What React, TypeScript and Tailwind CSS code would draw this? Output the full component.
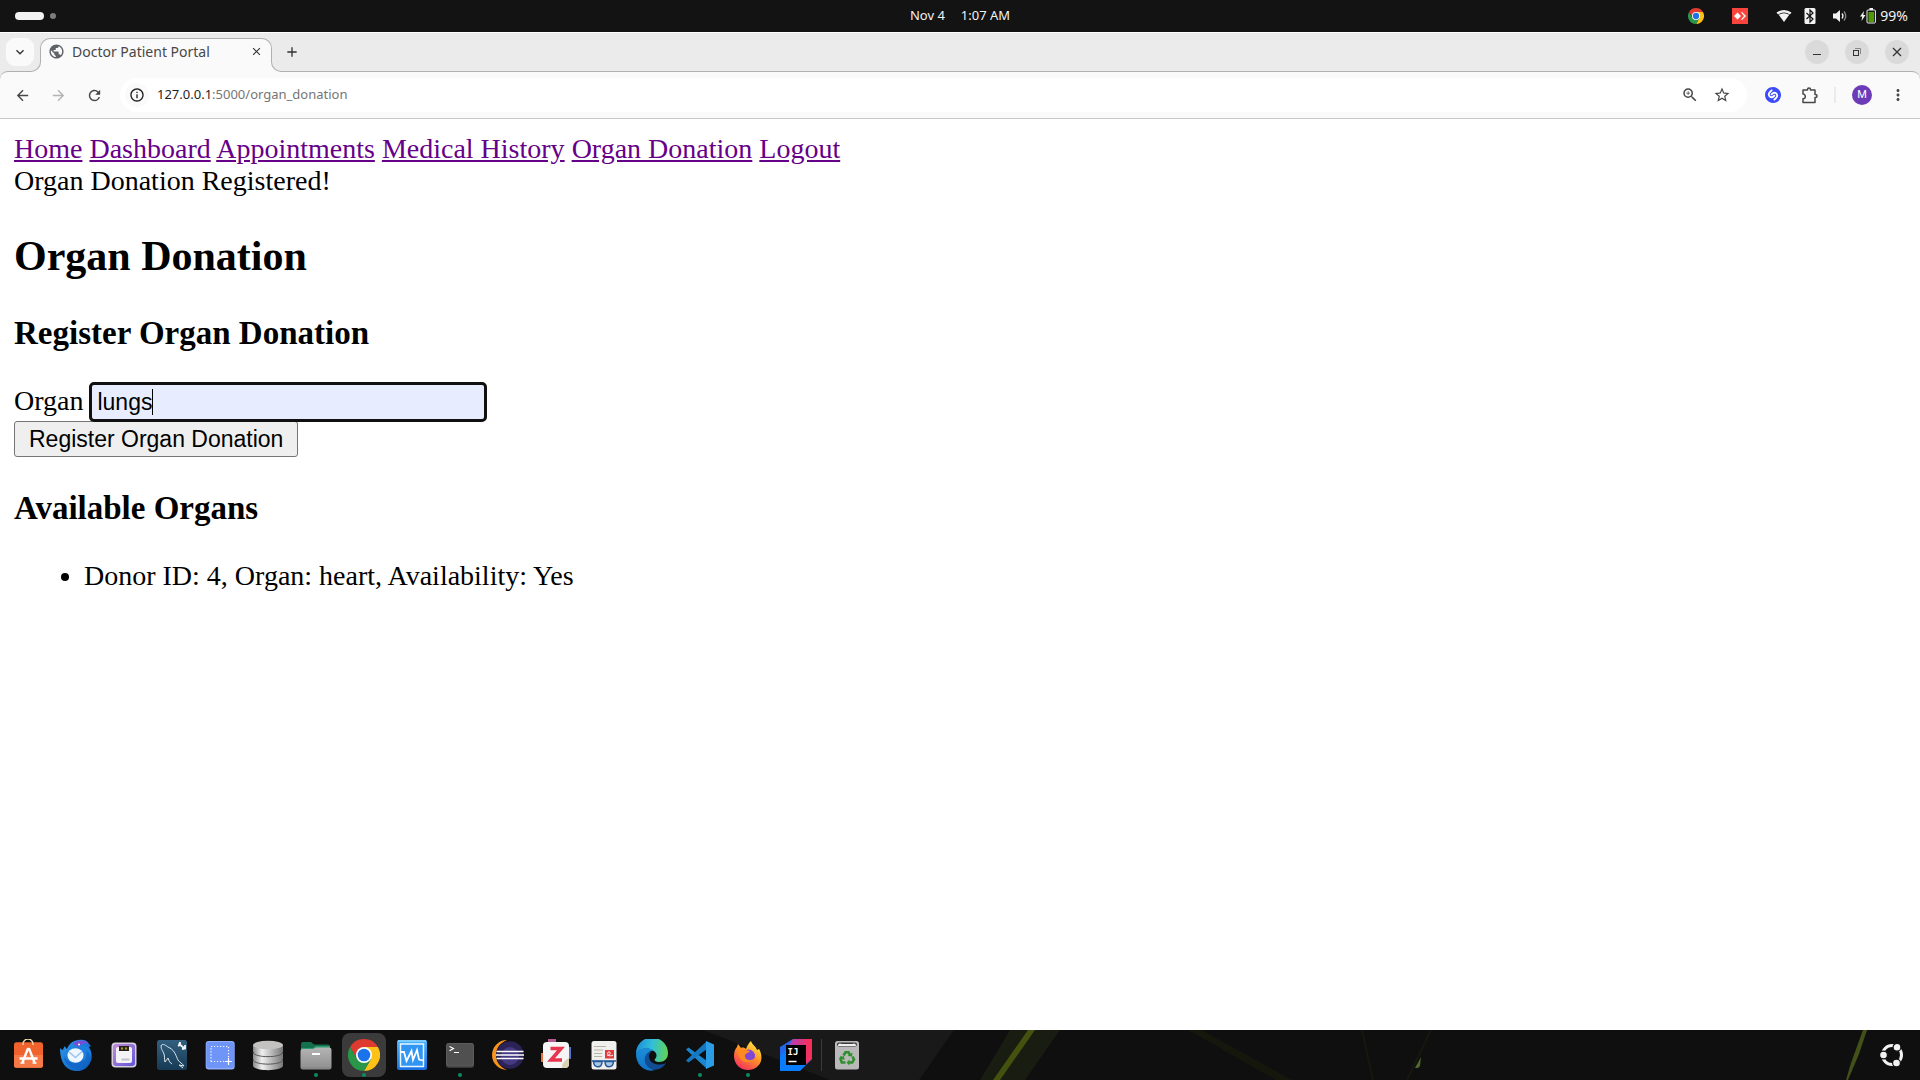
import React from "react";
import {
  MdAdd,
  MdArrowBack,
  MdArrowForward,
  MdClose,
  MdMoreVert,
  MdOutlineInfo,
  MdPublic,
  MdRefresh,
  MdStarBorder,
  MdZoomIn,
  MdKeyboardArrowDown,
} from "react-icons/md";
import { SiShazam } from "react-icons/si";

function Svg({ children }: { children: React.ReactNode }) {
  return (
    <svg viewBox="0 0 32 32" className="size-8" aria-hidden="true">
      {children}
    </svg>
  );
}

function ChromeLogo({ className }: { className: string }) {
  return (
    <svg viewBox="0 0 32 32" className={className} aria-hidden="true">
      <path d="M2.14 8A16 16 0 0 1 29.86 8H16L9.07 20Z" fill="#df3a2f" />
      <path d="M29.86 8A16 16 0 0 1 16 32L22.93 20 16 8Z" fill="#fdc117" />
      <path d="M16 32A16 16 0 0 1 2.14 8L9.07 20H22.93Z" fill="#2a9648" />
      <circle cx="16" cy="16" r="8" fill="#fff" />
      <circle cx="16" cy="16" r="6.3" fill="#1a73e8" />
    </svg>
  );
}

const AppCenter = () => (
  <Svg>
    <rect x="2" y="3.3" width="29" height="25.4" rx="2.5" fill="#f0632c" />
    <path d="M2 16h29v10.2a2.5 2.5 0 0 1-2.5 2.5h-24A2.5 2.5 0 0 1 2 26.2z" fill="#f57a45" />
    <path d="M11 6V5a5 5 0 0 1 10 0v1" fill="none" stroke="#f2dcae" strokeWidth="1.3" />
    <path d="M10.5 23.500 15.800 10h1.400l5.300 13.500M7.500 19.500h18" fill="none" stroke="#fff" strokeWidth="2.4" strokeLinejoin="round" />
    <path d="M8.500 24h4M20.500 24h4" stroke="#fff" strokeWidth="1.5" />
  </Svg>
);

const Thunderbird = () => (
  <Svg>
    <defs>
      <linearGradient id="tb" x1="0" y1="0" x2="1" y2="1">
        <stop offset="0" stopColor="#2b9bf0" />
        <stop offset="1" stopColor="#0b57b8" />
      </linearGradient>
    </defs>
    <path d="M0 9c1 1 2 2 3 2 0-1 1-3 2-4 0 1 1 2 2 3 2-6 8-10 16-9 3 0 5 2 6 4l2 2-2 1c3 5 4 11 1 16-3 6-9 9-15 8C6 31 0 24 0 9z" fill="url(#tb)" />
    <path d="M13 5c3-4 12-5 16 0-5-2-8 0-10 3-3-2-5-2-6-3z" fill="#7b4bd8" />
    <path d="M19 8c7-4 13 2 12 10-1-4-3-6-5-6 1 6-1 9-3 11z" fill="#1d7fe2" />
    <ellipse cx="15.5" cy="16.5" rx="8" ry="7.3" fill="#eef6ff" />
    <path d="m9 13 6.500 5.500L22 12.500" fill="none" stroke="#9bc4ee" strokeWidth="1.5" />
    <path d="M4 17c0 7 5 11 11 12 6 0 9-4 9-9-2 4-6 5-9 4-6 0-9-3-11-7z" fill="#1268ca" />
    <circle cx="19" cy="5.5" r="1" fill="#fff" />
  </Svg>
);

const StartupDisk = () => (
  <Svg>
    <defs>
      <linearGradient id="sd" x1="0" y1="0" x2="1" y2="1">
        <stop offset="0" stopColor="#c78bd8" />
        <stop offset="1" stopColor="#5d55d8" />
      </linearGradient>
    </defs>
    <rect x="3.5" y="3.5" width="25" height="25" rx="4" fill="#d5d2de" />
    <rect x="5" y="5" width="22" height="22" rx="3" fill="url(#sd)" />
    <rect x="8" y="8" width="16" height="16" rx="2" fill="#f4f4f6" />
    <rect x="11" y="7" width="10" height="5" fill="#26231b" />
    <path d="M13 9.500h2M17 9.500h2" stroke="#b39b20" strokeWidth="2" />
    <path d="M13.500 20.500h8" stroke="#c2c2c8" strokeWidth="2" />
  </Svg>
);

const MysqlWorkbench = () => (
  <Svg>
    <defs>
      <linearGradient id="mw" x1="0" y1="0" x2="0" y2="1">
        <stop offset="0" stopColor="#33607f" />
        <stop offset="1" stopColor="#163a55" />
      </linearGradient>
    </defs>
    <rect x="1" y="1" width="30" height="30" rx="2.5" fill="url(#mw)" />
    <path
      d="M9 23c-1-4 0-5-1-8-1-3-4-6-2.500-9C8 4 11 8 14 9c5 3 6 8 8 12 2 3 4 3 6 6l-5-1 4 3M9 23l3-4c1 3 2 5 4 6"
      fill="none"
      stroke="#dbe7ef"
      strokeWidth="1"
    />
    <path d="m22.500 4.500 5.500 4.500M24 3v3l-2 1M29 6v3.500l-3 .5" fill="none" stroke="#f2f6f9" strokeWidth="1.8" />
  </Svg>
);

const Screenshot = () => (
  <Svg>
    <rect x="1.7" y="2" width="29" height="28.5" rx="3" fill="#8faefb" />
    <rect x="2.5" y="3" width="27.5" height="26" rx="2.5" fill="#6f95f8" />
    <path d="M7 22.500V7.500h17.500V19M7 22.500h14" fill="none" stroke="#fff" strokeWidth="1.2" strokeDasharray="1.200 1.800" />
    <path d="M24.500 19v7M21 22.500h7" stroke="#fff" strokeWidth="1.2" />
  </Svg>
);

const Database = () => (
  <Svg>
    <defs>
      <linearGradient id="db" x1="0" y1="0" x2="1" y2="0">
        <stop offset="0" stopColor="#8b8b8b" />
        <stop offset=".3" stopColor="#f0f0f0" />
        <stop offset="1" stopColor="#777" />
      </linearGradient>
    </defs>
    <path d="M1 24v3c2 5.500 28 5.500 30 0v-6H1z" fill="url(#db)" />
    <path d="M1 21c2 5.500 28 5.500 30 0" fill="none" stroke="#555" strokeWidth="1" />
    <path d="M1 14v6c2 5.500 28 5.500 30 0v-6z" fill="url(#db)" />
    <path d="M1 13.500c2 5.500 28 5.500 30 0" fill="none" stroke="#555" strokeWidth="1" />
    <path d="M1 6v6.500c2 5.500 28 5.500 30 0V6z" fill="url(#db)" />
    <ellipse cx="16" cy="6" rx="15" ry="4.3" fill="#c4c2c1" />
  </Svg>
);

const Files = () => (
  <Svg>
    <defs>
      <linearGradient id="fl" x1="0" y1="0" x2="0" y2="1">
        <stop offset="0" stopColor="#b4b4b4" />
        <stop offset="1" stopColor="#8e8e8e" />
      </linearGradient>
    </defs>
    <path d="M1 5a2 2 0 0 1 2-2h8l3 2.500h14a2 2 0 0 1 2 2V14H1z" fill="#12704d" />
    <path d="M1 11V9h12l3-2h14v4z" fill="#2c9a70" />
    <path d="M.5 12a2 2 0 0 1 2-2h10.500l3-1.500h13a2.500 2.500 0 0 1 2.500 2.500v17a2.500 2.500 0 0 1-2.500 2.500H3a2.500 2.500 0 0 1-2.500-2.500z" fill="url(#fl)" />
    <path d="M12 15h8" stroke="#fff" strokeWidth="2" />
    <path d="M1 29h30" stroke="#808080" strokeWidth="1" />
  </Svg>
);

const SystemMonitor = () => (
  <Svg>
    <defs>
      <linearGradient id="sm" x1="0" y1="0" x2="0" y2="1">
        <stop offset="0" stopColor="#49b4fb" />
        <stop offset="1" stopColor="#1b6fe0" />
      </linearGradient>
    </defs>
    <rect x="1" y="1" width="30" height="30" rx="2" fill="url(#sm)" />
    <path d="M2 2h28" stroke="#8fd4ff" strokeWidth="1.5" />
    <rect x="4.5" y="5" width="23" height="22.5" fill="#3195f3" stroke="#e8f6ff" strokeWidth="1.5" />
    <path d="M5 13h3l2.500 9L14 15l1.500-3 1.500 9 4-10 2 9.500 4 1" fill="none" stroke="#fff" strokeWidth="1.8" />
  </Svg>
);

const Terminal = () => (
  <Svg>
    <rect x="2" y="4" width="28" height="25" rx="2.5" fill="#383838" />
    <rect x="2.5" y="4.5" width="27" height="22.5" rx="2" fill="#505050" stroke="#626262" strokeWidth=".8" />
    <path d="m5.500 7.500 4 2-4 2.200M10 13.500h5" fill="none" stroke="#fff" strokeWidth="1.2" />
  </Svg>
);

const Eclipse = () => (
  <Svg>
    <path d="M15 1A15 15 0 0 0 15 31C8 28 4 23 4 16S8 4 15 1z" fill="#f7941e" />
    <circle cx="18" cy="16" r="13.8" fill="#2c2255" />
    <circle cx="18" cy="17" r="9" fill="#443a82" />
    <path d="M4.500 12.500h27M4 16h28M4.500 19.500h27" stroke="#fff" strokeWidth="1.5" />
  </Svg>
);

const Zotero = () => (
  <Svg>
    <rect x="8" y="0" width="8" height="6" fill="#b5588d" />
    <rect x="25" y="8" width="6" height="12" fill="#5a70c9" />
    <rect x="1" y="14" width="6" height="9" fill="#e8703c" />
    <rect x="3" y="3" width="26" height="26" rx="4" fill="#f5f5f5" />
    <path d="M29 19v6a4 4 0 0 1-4 4h-3c0-5 3-8 7-10z" fill="#d9d2b4" />
    <path d="M10.500 9.500h10.500L11 21h11" fill="none" stroke="#e9344f" strokeWidth="3.6" />
  </Svg>
);

const DocumentViewer = () => (
  <Svg>
    <rect x="3.5" y="2" width="25" height="28.5" rx="2.5" fill="#f1f0ee" />
    <path d="M6 7.500h12M6 11h9M6 14.500h8M6 17.500h8" stroke="#b7b4a6" strokeWidth="1" />
    <rect x="17" y="11" width="9" height="8.5" fill="#e23b3b" />
    <path d="M19 16c2 2 5-3 2-3s-1 6 4 3" fill="none" stroke="#fff" strokeWidth="1" />
    <g fill="#a9c8e0" stroke="#25589b" strokeWidth="1.5">
      <path d="M5.500 22.500h8.500c0 7-8 7-8.500 0zM17 22.500h8.500c-.5 7-8.500 7-8.500 0z" />
      <path d="M4 22h24" />
    </g>
  </Svg>
);

const Edge = () => (
  <Svg>
    <defs>
      <linearGradient id="e1" x1="0" y1=".4" x2="1" y2=".5">
        <stop offset="0" stopColor="#1e8ddb" />
        <stop offset=".5" stopColor="#32c0d6" />
        <stop offset="1" stopColor="#62d455" />
      </linearGradient>
      <linearGradient id="e2" x1="0" y1="0" x2="0" y2="1">
        <stop offset="0" stopColor="#1b8fdc" />
        <stop offset="1" stopColor="#1270c4" />
      </linearGradient>
    </defs>
    <path d="M0 15A16 16 0 0 1 32 14c0 6-4 9-9 9-4 0-5-2-4-3 2-2 2-5 0-7-5-5-14-5-19 2z" fill="url(#e1)" />
    <path d="M0 15c4-7 13-8 18-3-3-1-8 2-8 8 0 5 4 10 9 11C9 34 0 26 0 15z" fill="url(#e2)" />
    <path d="M13 13c-5 3-6 10-1 15 5 4 13 4 18-4-6 3-16 2-17-6-.3-2 .5-4 2-5z" fill="#124c93" />
  </Svg>
);

const VsCode = () => (
  <Svg>
    <path d="M2 10.500 4.500 8.500 23 22v8z" fill="#1a86d0" />
    <path d="M2 21.500 4.500 23.500 23 10V2z" fill="#1577bf" />
    <path d="M22 2 30 5.500v21L22 30z" fill="#2b9de6" />
  </Svg>
);

const Firefox = () => (
  <Svg>
    <defs>
      <linearGradient id="ff" x1=".8" y1="0" x2=".2" y2="1">
        <stop offset="0" stopColor="#fff04a" />
        <stop offset=".45" stopColor="#ff9426" />
        <stop offset="1" stopColor="#f52862" />
      </linearGradient>
    </defs>
    <path d="M2 17c0-4 1-7 3-9l1-3 3 4c2-1 4 0 5 1 1-4 4-7 5-8 1 4 5 5 6 9l2-1c5 8 3 20-11 21C8 31 2 25 2 17z" fill="url(#ff)" />
    <circle cx="16.5" cy="17" r="6.5" fill="#8146d6" />
    <path d="M6 11c3-3 6-2 8 0l4 1c-1 2-4 2-5 4-1 5 6 7 10 3-2 7-17 7-17-8z" fill="#ff8a1f" />
  </Svg>
);

const IntelliJ = () => (
  <Svg>
    <defs>
      <linearGradient id="ij" x1="0" y1="0" x2="1" y2="0">
        <stop offset="0" stopColor="#9a45cf" />
        <stop offset="1" stopColor="#ff2d50" />
      </linearGradient>
    </defs>
    <path d="M14 0h18v20L20 32H0V13z" fill="#087cfa" />
    <path d="M13 0h19v20l-7 6V6H5z" fill="url(#ij)" />
    <path d="M0 8 13 0 6 10 0 18z" fill="#2466e8" />
    <rect x="6" y="6" width="20" height="20" fill="#000" />
    <text x="7.5" y="16" fontFamily="DejaVu Sans Mono, monospace" fontWeight="700" fontSize="9" fill="#fff">
      IJ
    </text>
    <path d="M8.500 22.500h8" stroke="#fff" strokeWidth="1.5" />
  </Svg>
);

const Trash = () => (
  <Svg>
    <rect x="4" y="2" width="24" height="28.5" rx="2.5" fill="#b9b9b9" />
    <rect x="6" y="3.5" width="20" height="4" rx="2" fill="#3a3a3a" />
    <path d="M7 7c0-3 2-3 4-2h10c2-1 4-1 4 2" fill="#eee" />
    <g fill="none" stroke="#2f8f2b" strokeWidth="2.6">
      <path d="m12.500 16.500 2-3.200h3l1.800 3M21.500 17.500l1.500 3-1.800 3H18M14.500 23.500h-3.700L9.500 20l1.500-2.500" />
    </g>
    <path d="m16.500 17 4.500.5.500-4zM18.500 20.500v6L15.500 23.500zM8 19l5-2 .5 4z" fill="#2f8f2b" />
  </Svg>
);

const dock = [
  { name: "App Center", Icon: AppCenter },
  { name: "Thunderbird", Icon: Thunderbird },
  { name: "Startup Disk Creator", Icon: StartupDisk },
  { name: "MySQL Workbench", Icon: MysqlWorkbench },
  { name: "Screenshot", Icon: Screenshot },
  { name: "Database", Icon: Database },
  { name: "Files", Icon: Files, running: true },
  { name: "Google Chrome", Icon: () => <ChromeLogo className="size-8" />, running: true, active: true },
  { name: "System Monitor", Icon: SystemMonitor },
  { name: "Terminal", Icon: Terminal, running: true },
  { name: "Eclipse", Icon: Eclipse },
  { name: "Zotero", Icon: Zotero },
  { name: "Document Viewer", Icon: DocumentViewer },
  { name: "Microsoft Edge", Icon: Edge },
  { name: "Visual Studio Code", Icon: VsCode, running: true },
  { name: "Firefox", Icon: Firefox, running: true },
  { name: "IntelliJ IDEA", Icon: IntelliJ },
];

function TopBar() {
  return (
    <header className="grid h-8 shrink-0 grid-cols-3 items-center bg-[#131313] text-[13px] text-[#f2f2f2]">
      <button aria-label="Activities" className="flex items-center gap-1.5 pl-[15px]">
        <span className="h-2 w-[29px] rounded-full bg-[#f2f2f2]" />
        <span className="size-1.5 rounded-full bg-[#7d7d7d]" />
      </button>
      <button className="flex justify-center gap-4">
        <span>Nov 4</span>
        <span>1:07 AM</span>
      </button>
      <div className="flex items-center justify-end pr-3">
        <ChromeLogo className="mr-7 size-4" />
        <svg viewBox="0 0 16 16" className="mr-7 size-4" aria-hidden="true">
          <rect width="16" height="16" fill="#fa443e" />
          <path d="M5.500 4.500 9 8l-3.500 3.500L2 8zM9 4.500l1-.5 4 4-4 4-1-.5L12 8z" fill="#fff" />
        </svg>
        <svg viewBox="0 0 16 16" className="mr-3 size-4" aria-hidden="true">
          <path d="M.5 4.500Q8-.5 15.500 4.500l-1.500 2Q8 2.500 2 6.500z" fill="#f2f2f2" />
          <path d="M2.700 6.800Q8 3.500 13.300 6.800L8 14z" fill="#f2f2f2" />
        </svg>
        <svg viewBox="0 0 12 16" className="mr-4 h-4 w-3" aria-hidden="true">
          <rect x=".5" width="11" height="16" rx="1.5" fill="#f2f2f2" />
          <path d="m2.500 5 6.500 6-3 3V2l3 3-6.500 6" fill="none" stroke="#131313" strokeWidth="1.2" />
        </svg>
        <svg viewBox="0 0 16 16" className="mr-3 size-4" aria-hidden="true">
          <path d="M1 5.500h3L8 2v12l-4-3.500H1z" fill="#f2f2f2" />
          <path d="M10 5.500q2 2.500 0 5" fill="none" stroke="#f2f2f2" strokeWidth="1.3" />
          <path d="M12 3.500q3.500 4.500 0 9" fill="none" stroke="#8a8a8a" strokeWidth="1.3" />
        </svg>
        <svg viewBox="0 0 16 16" className="mr-1 size-4" aria-hidden="true">
          <path d="M4 3 0 8.500h2.200L1.500 13l4-6H3.300z" fill="#f2f2f2" />
          <rect x="7" y="2" width="8.4" height="13" rx="1" fill="none" stroke="#f2f2f2" />
          <rect x="9.5" y="0" width="3.5" height="2" fill="#f2f2f2" />
          <rect x="8.5" y="4" width="5.5" height="10" fill="#4e9a06" />
        </svg>
        <span className="text-sm">99%</span>
      </div>
    </header>
  );
}

function TabStrip() {
  return (
    <div className="flex h-10 shrink-0 items-end border-t border-white bg-[#ebebeb]">
      <button
        aria-label="Search tabs"
        className="mb-1.5 ml-1.5 flex size-7 items-center justify-center rounded-[9px] bg-[#fafafa] text-[#333]"
      >
        <MdKeyboardArrowDown size={16} />
      </button>
      <div className="relative z-10 ml-1.5 flex h-[34px] w-[232px] items-center rounded-t-[10px] border border-b-0 border-[#b0b0b0] bg-[#fafafa] pr-2 pb-2 pl-[7px]">
        <span className="absolute bottom-0 -left-2.5 size-2.5 bg-[#fafafa]">
          <span className="block size-full rounded-br-[10px] border-r border-b border-[#b0b0b0] bg-[#ebebeb]" />
        </span>
        <span className="absolute -right-2.5 bottom-0 size-2.5 bg-[#fafafa]">
          <span className="block size-full rounded-bl-[10px] border-b border-l border-[#b0b0b0] bg-[#ebebeb]" />
        </span>
        <MdPublic size={17} className="text-[#5f6368]" />
        <span className="ml-[7px] flex-1 text-sm text-[#474747]">Doctor Patient Portal</span>
        <button aria-label="Close tab" className="text-[#333]">
          <MdClose size={13} />
        </button>
      </div>
      <button aria-label="New tab" className="mb-3 ml-3 text-[#333]">
        <MdAdd size={16} />
      </button>
      <div className="ml-auto flex gap-4 pr-[11px] pb-2">
        <button aria-label="Minimize" className="flex size-6 items-center justify-center rounded-full bg-[#dadada]">
          <svg viewBox="0 0 12 12" className="size-3">
            <path d="M2 8.500h8" stroke="#333" />
          </svg>
        </button>
        <button aria-label="Restore" className="flex size-6 items-center justify-center rounded-full bg-[#dadada]">
          <svg viewBox="0 0 12 12" className="size-3">
            <path d="M4 2.500h5.500V8" fill="none" stroke="#888" />
            <rect x="2.5" y="4.5" width="5" height="5" fill="none" stroke="#333" />
          </svg>
        </button>
        <button aria-label="Close" className="flex size-6 items-center justify-center rounded-full bg-[#dadada]">
          <svg viewBox="0 0 12 12" className="size-3">
            <path d="m2 2 8 8M10 2l-8 8" stroke="#333" strokeWidth="1.3" />
          </svg>
        </button>
      </div>
    </div>
  );
}

function Toolbar() {
  return (
    <div className="-mt-px shrink-0 bg-[#ebebeb]">
      <div className="flex h-12 items-center rounded-t-lg border-t border-b border-t-[#b0b0b0] border-b-[#c8c8c8] bg-[#fafafa] pr-[13px] pl-3.5 text-[#474747]">
        <button aria-label="Back">
          <MdArrowBack size={17} />
        </button>
        <button aria-label="Forward" className="ml-[19px] text-[#b4b4b4]">
          <MdArrowForward size={17} />
        </button>
        <button aria-label="Reload" className="ml-[19px]">
          <MdRefresh size={17} />
        </button>
        <div className="ml-[17px] flex h-[34px] flex-1 items-center rounded-full bg-white pr-4 pl-[5px]">
          <button
            aria-label="Site information"
            className="flex size-6 items-center justify-center rounded-full bg-[#fafafa] text-[#1f1f1f]"
          >
            <MdOutlineInfo size={16} />
          </button>
          <span className="ml-2 flex-1 text-[13px] text-[#757575]">
            <span className="text-[#1f1f1f]">127.0.0.1</span>:5000/organ_donation
          </span>
          <button aria-label="Zoom">
            <MdZoomIn size={18} />
          </button>
          <button aria-label="Bookmark this page" className="ml-3.5">
            <MdStarBorder size={18} />
          </button>
        </div>
        <button aria-label="Shazam" className="ml-[18px] rounded-full bg-white text-[#3c4bfa]">
          <SiShazam size={16} />
        </button>
        <button aria-label="Extensions" className="ml-5">
          <svg viewBox="0 0 17 17" className="size-[17px]">
            <path
              d="M2 3h4.500V2.500a1.500 1.500 0 0 1 3 0V3H14v4.500h.5a1.500 1.500 0 0 1 0 3H14V15.500H2v-3.800a2.300 2.300 0 0 0 0-4.600z"
              fill="none"
              stroke="#474747"
              strokeWidth="1.5"
              strokeLinejoin="round"
            />
          </svg>
        </button>
        <span className="mx-4 h-4 w-0.5 bg-[#ebebeb]" />
        <button
          aria-label="Profile"
          className="flex size-5 items-center justify-center rounded-full bg-[#6b3bb8] font-[Roboto,sans-serif] text-[11px] text-white"
        >
          M
        </button>
        <button aria-label="Menu" className="ml-[17px]">
          <MdMoreVert size={18} />
        </button>
      </div>
    </div>
  );
}

const links = ["Home", "Dashboard", "Appointments", "Medical History", "Organ Donation", "Logout"];

function Page() {
  return (
    <main className="flex-1 bg-white p-3.5 font-['Liberation_Serif','Times_New_Roman',serif] text-[28px] leading-8 text-black">
      <nav>
        {links.map((label) => (
          <React.Fragment key={label}>
            <a href="#" className="text-[#660088] underline">
              {label}
            </a>{" "}
          </React.Fragment>
        ))}
      </nav>
      <p>Organ Donation Registered!</p>
      <h2 className="mt-[35px] text-[42px] leading-[48px] font-bold">Organ Donation</h2>
      <h3 className="mt-[35px] text-[33px] leading-[37px] font-bold">Register Organ Donation</h3>
      <form className="mt-[33px]" onSubmit={(e) => e.preventDefault()}>
        <div className="flex h-9 items-start gap-[9px]">
          <label htmlFor="organ">Organ</label>
          <span className="relative flex">
            <input
              id="organ"
              type="text"
              defaultValue="lungs"
              className="h-[34px] w-[392px] rounded-[2px] bg-[#e7edfe] px-[5px] font-['Liberation_Sans',Arial,sans-serif] text-[23px] text-black outline-3 outline-[#101010]"
            />
            <span className="absolute top-1 left-[60px] h-[26px] w-px bg-black" />
          </span>
        </div>
        <button
          type="submit"
          className="flex h-9 items-center rounded-[3px] border border-[#767676] bg-[#efefef] px-3.5 font-['Liberation_Sans',Arial,sans-serif] text-[23px]"
        >
          Register Organ Donation
        </button>
      </form>
      <h3 className="mt-[33px] text-[33px] leading-[37px] font-bold">Available Organs</h3>
      <ul className="mt-[33px] list-disc pl-[70px]">
        <li>Donor ID: 4, Organ: heart, Availability: Yes</li>
      </ul>
    </main>
  );
}

function Dock() {
  return (
    <footer className="relative flex h-[50px] shrink-0 items-center bg-[#0f0f0f] pr-4 pl-3">
      <svg
        viewBox="0 0 1920 50"
        preserveAspectRatio="none"
        className="absolute inset-0 size-full"
        aria-hidden="true"
      >
        <path d="M703 0h251l-35 50H830z" fill="#191919" />
        <path d="M1010 0h50l-35 50h-45z" fill="#191c10" />
        <path d="M1028 0h7l-35 50h-7z" fill="#43520f" />
        <path d="M1188 0h14l90 50h-16z" fill="#15170d" />
        <path d="m1362 0 11 50M1431 0l-24 50" stroke="#16180f" strokeWidth="2" />
        <path d="m1421 27-1 9-2 2h-3z" fill="#50692c" />
        <path d="M1863 0h4l-8 24-11 26h-2l5-17z" fill="#435019" />
      </svg>
      <nav className="relative flex items-center gap-1" aria-label="Dock">
        {dock.map(({ name, Icon, running, active }) => (
          <button
            key={name}
            aria-label={name}
            className={
              "relative flex size-11 items-center justify-center rounded-lg first:-ml-1.5 " +
              (active ? "bg-[#3b3b3b]" : "")
            }
          >
            <Icon />
            {running && <span className="absolute bottom-0 size-1 rounded-full bg-[#0e8a5f]" />}
          </button>
        ))}
      </nav>
      <span className="relative mr-[9px] ml-[3px] h-8 w-px bg-[#3a3a3a]" />
      <button aria-label="Trash" className="relative">
        <Trash />
      </button>
      <button aria-label="Show applications" className="relative ml-auto">
        <svg viewBox="0 0 24 24" className="size-6">
          <circle cx="12" cy="12" r="9.5" fill="none" stroke="#f2f2f2" strokeWidth="3" />
          <g fill="#f2f2f2" stroke="#0f0f0f" strokeWidth="1.2">
            <circle cx="3.5" cy="12" r="3.9" />
            <circle cx="17" cy="4.3" r="3.9" />
            <circle cx="16.5" cy="20" r="3.9" />
          </g>
        </svg>
      </button>
    </footer>
  );
}

export default function App() {
  return (
    <div className="flex min-h-screen flex-col font-['Noto_Sans','Open_Sans',sans-serif]">
      <TopBar />
      <TabStrip />
      <Toolbar />
      <Page />
      <Dock />
    </div>
  );
}
